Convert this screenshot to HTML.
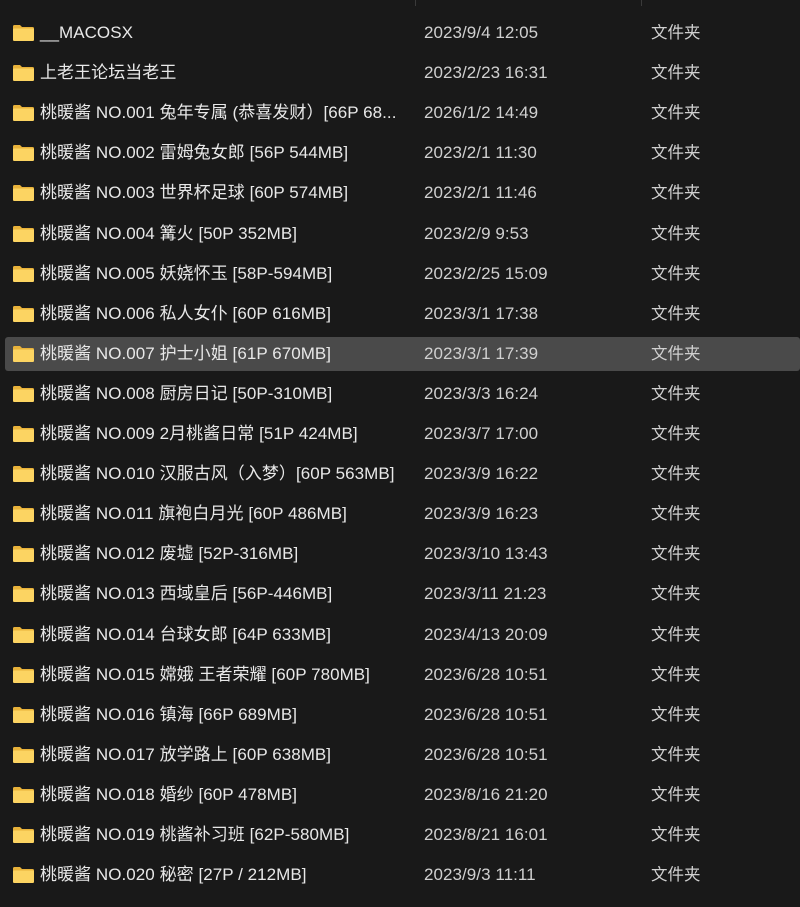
<!DOCTYPE html>
<html><head><meta charset="utf-8"><style>
body{margin:0;width:800px;height:907px;background:#191919;overflow:hidden;font-family:"Liberation Sans","Noto Sans CJK SC",sans-serif;font-size:17px;color:#e6e6e6;position:relative}
.sep{position:absolute;top:0;width:1px;height:6px;background:#3a3a3a}
.row{position:absolute;left:0;width:800px;height:34px}
.row.sel{background:#4a4a4a;left:5px;width:795px;border-radius:3px}
.ic{position:absolute;left:13px;top:9px;width:21px;height:16px}
.n,.d,.t{position:absolute;top:7px;height:20px;line-height:20px;white-space:nowrap}
.n{left:40px;color:#e8e8e8;letter-spacing:0.05px}
.d{left:424px;color:#d0d0d0;letter-spacing:0.05px}
.t{left:651px;color:#d0d0d0;font-size:16.5px}
.sel .ic{left:8px}.sel .n{left:35px}.sel .d{left:419px}.sel .t{left:646px}
</style></head><body>
<div class="sep" style="left:415px"></div><div class="sep" style="left:641px"></div>
<div id="list"></div>
<script>
var rows=[["__MACOSX","2023/9/4 12:05"],["上老王论坛当老王","2023/2/23 16:31"],["桃暖酱 NO.001 兔年专属 (恭喜发财）[66P 68...","2026/1/2 14:49"],["桃暖酱 NO.002 雷姆兔女郎 [56P 544MB]","2023/2/1 11:30"],["桃暖酱 NO.003 世界杯足球 [60P 574MB]","2023/2/1 11:46"],["桃暖酱 NO.004 篝火 [50P 352MB]","2023/2/9 9:53"],["桃暖酱 NO.005 妖娆怀玉 [58P-594MB]","2023/2/25 15:09"],["桃暖酱 NO.006 私人女仆 [60P 616MB]","2023/3/1 17:38"],["桃暖酱 NO.007 护士小姐 [61P 670MB]","2023/3/1 17:39"],["桃暖酱 NO.008 厨房日记 [50P-310MB]","2023/3/3 16:24"],["桃暖酱 NO.009 2月桃酱日常 [51P 424MB]","2023/3/7 17:00"],["桃暖酱 NO.010 汉服古风（入梦）[60P 563MB]","2023/3/9 16:22"],["桃暖酱 NO.011 旗袍白月光 [60P 486MB]","2023/3/9 16:23"],["桃暖酱 NO.012 废墟 [52P-316MB]","2023/3/10 13:43"],["桃暖酱 NO.013 西域皇后 [56P-446MB]","2023/3/11 21:23"],["桃暖酱 NO.014 台球女郎 [64P 633MB]","2023/4/13 20:09"],["桃暖酱 NO.015 嫦娥 王者荣耀 [60P 780MB]","2023/6/28 10:51"],["桃暖酱 NO.016 镇海 [66P 689MB]","2023/6/28 10:51"],["桃暖酱 NO.017 放学路上 [60P 638MB]","2023/6/28 10:51"],["桃暖酱 NO.018 婚纱 [60P 478MB]","2023/8/16 21:20"],["桃暖酱 NO.019 桃酱补习班 [62P-580MB]","2023/8/21 16:01"],["桃暖酱 NO.020 秘密 [27P / 212MB]","2023/9/3 11:11"]];
var ic='<svg class="ic" viewBox="0 0 21 16"><path d="M0 1.5Q0 0 1.5 0H7L9 2H19.5Q21 2 21 3.5V14.5Q21 16 19.5 16H1.5Q0 16 0 14.5Z" fill="#e8b23a"/><path d="M0 4.5Q0 3.5 1 3.5H20Q21 3.5 21 4.5V14.5Q21 16 19.5 16H1.5Q0 16 0 14.5Z" fill="#fcd462"/></svg>';
var h='';rows.forEach(function(r,i){var y=16+i*40.1;h+='<div class="row'+(i==8?' sel':'')+'" style="top:'+y.toFixed(1)+'px">'+ic+'<span class="n">'+r[0]+'</span><span class="d">'+r[1]+'</span><span class="t">文件夹</span></div>';});
document.getElementById('list').innerHTML=h;
</script>
</body></html>
